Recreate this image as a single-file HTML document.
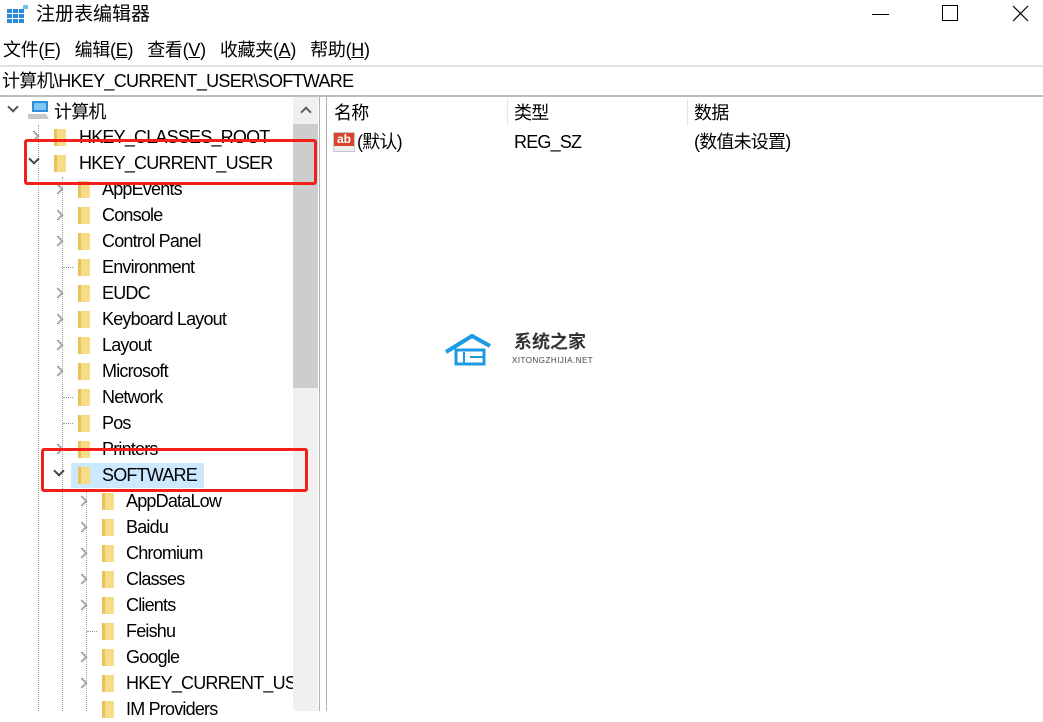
<!DOCTYPE html>
<html><head><meta charset="utf-8"><style>
*{margin:0;padding:0;box-sizing:border-box}
body{width:1043px;height:711px;overflow:hidden;background:#fff;font-family:"Liberation Sans","Noto Sans CJK SC",sans-serif;color:#000;position:relative}
.a{position:absolute;white-space:nowrap}
.t{font-size:18px;line-height:26px;height:26px;letter-spacing:-0.8px}
.f{position:absolute;width:12px;height:17px;background:linear-gradient(90deg,#e8c35a 0 3px,#f7dc88 3px)}
.ch{position:absolute;width:8px;height:8px;border-right:2px solid #a6a6a6;border-top:2px solid #a6a6a6;transform:rotate(45deg)}
.cd{position:absolute;width:8px;height:8px;border-right:2px solid #444;border-bottom:2px solid #444;transform:rotate(45deg)}
.dv{position:absolute;border-left:1px dotted #999}
.dh{position:absolute;border-top:1px dotted #999;width:10px}
</style></head><body>
<svg class="a" style="left:7px;top:5px" width="22" height="20"><g fill="#2a8ad8"><rect x="0" y="4" width="5" height="4"/><rect x="6" y="4" width="5" height="4"/><rect x="12" y="4" width="5" height="4"/><rect x="0" y="9" width="5" height="4"/><rect x="6" y="9" width="5" height="4"/><rect x="12" y="9" width="5" height="4"/><rect x="0" y="14" width="5" height="4"/><rect x="6" y="14" width="5" height="4"/><rect x="12" y="14" width="5" height="4"/><rect x="16" y="0" width="5" height="4" fill="#6cc0f0"/></g></svg>
<div class="a" style="left:36px;top:2px;font-size:19px;line-height:26px">注册表编辑器</div>
<div class="a" style="left:872px;top:14px;width:17px;height:1px;background:#000"></div>
<div class="a" style="left:942px;top:5px;width:16px;height:16px;border:1px solid #000"></div>
<svg class="a" style="left:1012px;top:5px" width="17" height="17"><path d="M1 1L16 16M16 1L1 16" stroke="#000" stroke-width="1.2"/></svg>
<div class="a" style="left:3px;top:37px;font-size:18px;line-height:26px;letter-spacing:-0.3px">文件(<u>F</u>)&nbsp;&nbsp; 编辑(<u>E</u>)&nbsp;&nbsp; 查看(<u>V</u>)&nbsp;&nbsp; 收藏夹(<u>A</u>)&nbsp;&nbsp; 帮助(<u>H</u>)</div>
<div class="a" style="left:0;top:65px;width:1043px;height:2px;background:#e3e3e3"></div>
<div class="a" style="left:2px;top:68px;font-size:18px;line-height:26px;letter-spacing:-0.7px">计算机\HKEY_CURRENT_USER\SOFTWARE</div>
<div class="a" style="left:0;top:95px;width:1043px;height:2px;background:#bdbdbd"></div>
<div class="a" style="left:293px;top:97px;width:25px;height:614px;background:#f0f0f0"></div>
<div class="a" style="left:293px;top:124px;width:25px;height:264px;background:#cdcdcd"></div>
<div class="ch" style="left:302px;top:108px;transform:rotate(-45deg);border-color:#606060"></div>
<div class="a" style="left:319px;top:97px;width:1px;height:614px;background:#b0b0b0"></div>
<div class="a" style="left:326px;top:97px;width:1px;height:614px;background:#b0b0b0"></div>
<div class="cd" style="left:9px;top:103px;border-color:#555"></div>
<svg class="a" style="left:26px;top:100px" width="24" height="22"><rect x="6" y="1" width="16" height="11" fill="#2e8fd8"/><rect x="8" y="3" width="12" height="7" fill="#7fc6f2"/><path d="M2 14L20 14L23 19L2 19Z" fill="#c8c8c8"/></svg>
<div class="a t" style="left:54px;top:99px">计算机</div>
<div class="dv" style="left:38px;top:125px;height:586px"></div>
<div class="dv" style="left:62px;top:177px;height:534px"></div>
<div class="dv" style="left:86px;top:489px;height:222px"></div>

<div class="ch" style="left:30px;top:132px"></div><div class="f" style="left:54px;top:129px"></div><div class="a t" style="left:79px;top:124px">HKEY_CLASSES_ROOT</div>
<div class="cd" style="left:30px;top:155px"></div><div class="f" style="left:54px;top:155px"></div><div class="a t" style="left:79px;top:150px">HKEY_CURRENT_USER</div>

<div class="ch" style="left:54px;top:185px"></div><div class="f" style="left:78px;top:181px"></div><div class="a t" style="left:102px;top:176px">AppEvents</div>
<div class="ch" style="left:54px;top:211px"></div><div class="f" style="left:78px;top:207px"></div><div class="a t" style="left:102px;top:202px">Console</div>
<div class="ch" style="left:54px;top:237px"></div><div class="f" style="left:78px;top:233px"></div><div class="a t" style="left:102px;top:228px">Control Panel</div>
<div class="dh" style="left:63px;top:267px"></div><div class="f" style="left:78px;top:259px"></div><div class="a t" style="left:102px;top:254px">Environment</div>
<div class="ch" style="left:54px;top:289px"></div><div class="f" style="left:78px;top:285px"></div><div class="a t" style="left:102px;top:280px">EUDC</div>
<div class="ch" style="left:54px;top:315px"></div><div class="f" style="left:78px;top:311px"></div><div class="a t" style="left:102px;top:306px">Keyboard Layout</div>
<div class="ch" style="left:54px;top:341px"></div><div class="f" style="left:78px;top:337px"></div><div class="a t" style="left:102px;top:332px">Layout</div>
<div class="ch" style="left:54px;top:367px"></div><div class="f" style="left:78px;top:363px"></div><div class="a t" style="left:102px;top:358px">Microsoft</div>
<div class="dh" style="left:63px;top:397px"></div><div class="f" style="left:78px;top:389px"></div><div class="a t" style="left:102px;top:384px">Network</div>
<div class="dh" style="left:63px;top:423px"></div><div class="f" style="left:78px;top:415px"></div><div class="a t" style="left:102px;top:410px">Pos</div>
<div class="ch" style="left:54px;top:445px"></div><div class="f" style="left:78px;top:441px"></div><div class="a t" style="left:102px;top:436px">Printers</div>
<div class="a" style="left:71px;top:463px;width:133px;height:25px;background:#cce8ff"></div>
<div class="cd" style="left:55px;top:467px"></div><div class="f" style="left:78px;top:467px"></div><div class="a t" style="left:102px;top:462px">SOFTWARE</div>

<div class="ch" style="left:78px;top:497px"></div><div class="f" style="left:102px;top:493px"></div><div class="a t" style="left:126px;top:488px">AppDataLow</div>
<div class="ch" style="left:78px;top:523px"></div><div class="f" style="left:102px;top:519px"></div><div class="a t" style="left:126px;top:514px">Baidu</div>
<div class="ch" style="left:78px;top:549px"></div><div class="f" style="left:102px;top:545px"></div><div class="a t" style="left:126px;top:540px">Chromium</div>
<div class="ch" style="left:78px;top:575px"></div><div class="f" style="left:102px;top:571px"></div><div class="a t" style="left:126px;top:566px">Classes</div>
<div class="ch" style="left:78px;top:601px"></div><div class="f" style="left:102px;top:597px"></div><div class="a t" style="left:126px;top:592px">Clients</div>
<div class="dh" style="left:87px;top:631px"></div><div class="f" style="left:102px;top:623px"></div><div class="a t" style="left:126px;top:618px">Feishu</div>
<div class="ch" style="left:78px;top:653px"></div><div class="f" style="left:102px;top:649px"></div><div class="a t" style="left:126px;top:644px">Google</div>
<div class="ch" style="left:78px;top:679px"></div><div class="f" style="left:102px;top:675px"></div><div class="a t" style="left:126px;top:670px;width:167px;overflow:hidden">HKEY_CURRENT_USER</div>
<div class="f" style="left:102px;top:701px"></div><div class="a t" style="left:126px;top:696px">IM Providers</div>

<div class="a" style="left:24px;top:139px;width:293px;height:46px;border:3px solid #f0201a;border-radius:3px"></div>
<div class="a" style="left:41px;top:448px;width:267px;height:44px;border:3px solid #f0201a;border-radius:3px"></div>

<div class="a" style="left:507px;top:99px;width:1px;height:27px;background:#e5e5e5"></div>
<div class="a" style="left:687px;top:99px;width:1px;height:27px;background:#e5e5e5"></div>
<div class="a t" style="left:334px;top:100px">名称</div>
<div class="a t" style="left:514px;top:100px">类型</div>
<div class="a t" style="left:694px;top:100px">数据</div>
<div class="a" style="left:333px;top:132px;width:22px;height:20px;background:#eee;border:1px solid #ccc"></div>
<div class="a" style="left:334px;top:133px;width:20px;height:13px;background:#d8442c;color:#fff;font-size:12px;font-weight:bold;line-height:13px;text-align:center">ab</div>
<div class="a t" style="left:357px;top:129px">(默认)</div>
<div class="a t" style="left:514px;top:129px">REG_SZ</div>
<div class="a t" style="left:694px;top:129px">(数值未设置)</div>
<svg class="a" style="left:444px;top:330px" width="60" height="40"><path d="M2 22L28 6L46 16" fill="none" stroke="#1c9ae6" stroke-width="4"/><rect x="12" y="20" width="28" height="14" fill="none" stroke="#1c9ae6" stroke-width="3"/><path d="M20 22V34M26 27H40" stroke="#1c9ae6" stroke-width="2"/></svg>
<div class="a" style="left:514px;top:331px;font-size:18px;font-weight:bold;color:#333;line-height:22px">系统之家</div>
<div class="a" style="left:512px;top:356px;font-size:8px;color:#444;line-height:10px;letter-spacing:0.5px">XITONGZHIJIA.NET</div>
</body></html>
